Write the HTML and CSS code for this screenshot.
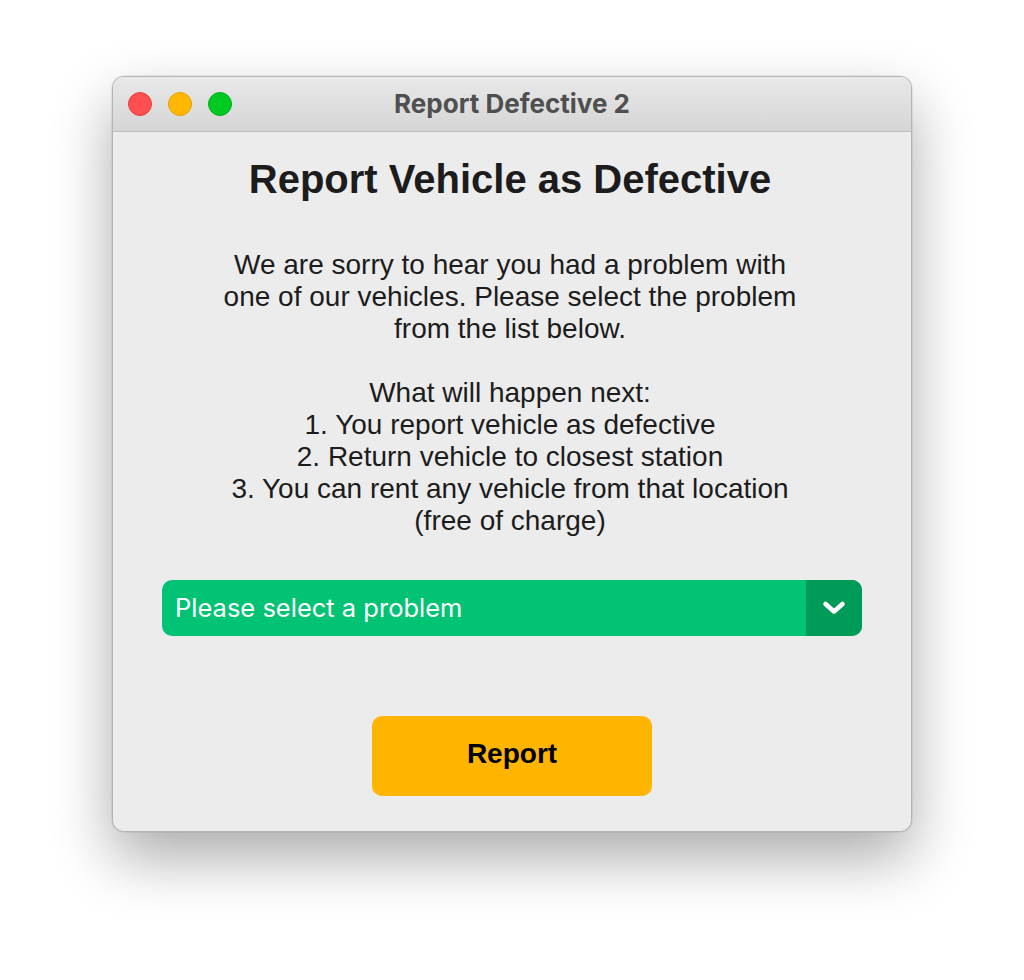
FILE: index.html
```html
<!DOCTYPE html>
<html>
	<head>
		<meta charset="UTF-8">
		<title>Report Defective 2</title>
		<link rel="stylesheet" href="styles.css">
	</head>
	<body>
		<div class="window">
			<div class="titlebar">
				<div class="lights">
					<span class="light red"></span>
					<span class="light yellow"></span>
					<span class="light green"></span>
				</div>
				<div class="title">Report Defective 2</div>
			</div>
			<div class="content">
				<h1>Report Vehicle as Defective</h1>
				<p class="info">
					We are sorry to hear you had a problem with<br>
					one of our vehicles. Please select the problem<br>
					from the list below.<br>
					<br>
					What will happen next:<br>
					1. You report vehicle as defective<br>
					2. Return vehicle to closest station<br>
					3. You can rent any vehicle from that location<br>
					(free of charge)
				</p>
				<div class="select">
					<span class="select-text">Please select a problem</span>
					<span class="select-arrow">
						<svg width="26" height="18" viewBox="0 0 26 18">
							<path d="M4.5 5 L13 12.5 L21.5 5" fill="none" stroke="#fff" stroke-width="4.5" stroke-linecap="round" stroke-linejoin="round"/>
						</svg>
					</span>
				</div>
				<button class="report">Report</button>
			</div>
		</div>
	</body>
</html>
```

FILE: styles.css
```css
*{
	margin: 0;
	padding: 0;
	box-sizing: border-box;
}
html{
	height: 100%;
}
body{
	min-height: 100%;
	background: #fff;
	padding: 76px 0 0 112px;
	font-family: "Liberation Sans", Arial, sans-serif;
}
.window{
	width: 800px;
	height: 756px;
	background: #ececec;
	border: 1px solid #b4b4b4;
	border-radius: 12px;
	overflow: hidden;
	box-shadow: 0 26px 60px rgba(0,0,0,0.33), 0 0 0 0.5px rgba(0,0,0,0.1);
}
.titlebar{
	height: 55px;
	background: linear-gradient(#e9e9e9, #d5d5d5);
	border-bottom: 1px solid #bcbcbc;
	display: flex;
	align-items: center;
	position: relative;
}
.lights{
	display: flex;
	gap: 16px;
	padding-left: 15px;
}
.light{
	width: 24px;
	height: 24px;
	border-radius: 50%;
	display: block;
}
.red{
	background: #ff4f4f;
	border: 1px solid #e5403f;
}
.yellow{
	background: #ffb700;
	border: 1px solid #e4a100;
}
.green{
	background: #00ca22;
	border: 1px solid #00ad1b;
}
.title{
	position: absolute;
	left: 0;
	right: 0;
	top: 12px;
	text-align: center;
	font-family: Inter, "Noto Sans", sans-serif;
	font-weight: 700;
	font-size: 26px;
	line-height: 30px;
	color: #4f4f4f;
	pointer-events: none;
}
.content{
	padding-top: 23px;
	display: flex;
	flex-direction: column;
	align-items: center;
}
h1{
	font-size: 40px;
	line-height: 48px;
	font-weight: 700;
	color: #1c1c1c;
	padding-right: 4px;
}
.info{
	margin-top: 46px;
	font-size: 28px;
	line-height: 32px;
	text-align: center;
	color: #1c1c1c;
	padding-right: 4px;
}
.select{
	margin-top: 43px;
	width: 700px;
	height: 56px;
	border-radius: 10px;
	background: #02c373;
	display: flex;
	align-items: center;
	overflow: hidden;
}
.select-text{
	flex: 1;
	padding-left: 13px;
	padding-bottom: 2px;
	color: #fff;
	font-family: Inter, "Noto Sans", sans-serif;
	font-size: 25.5px;
}
.select-arrow{
	width: 56px;
	height: 56px;
	background: #009b58;
	display: flex;
	align-items: center;
	justify-content: center;
}
.report{
	margin-top: 80px;
	width: 280px;
	height: 80px;
	border: none;
	border-radius: 10px;
	background: #ffb400;
	color: #000;
	font-family: "Liberation Sans", Arial, sans-serif;
	font-weight: 700;
	font-size: 28px;
	padding-bottom: 5px;
}
```
